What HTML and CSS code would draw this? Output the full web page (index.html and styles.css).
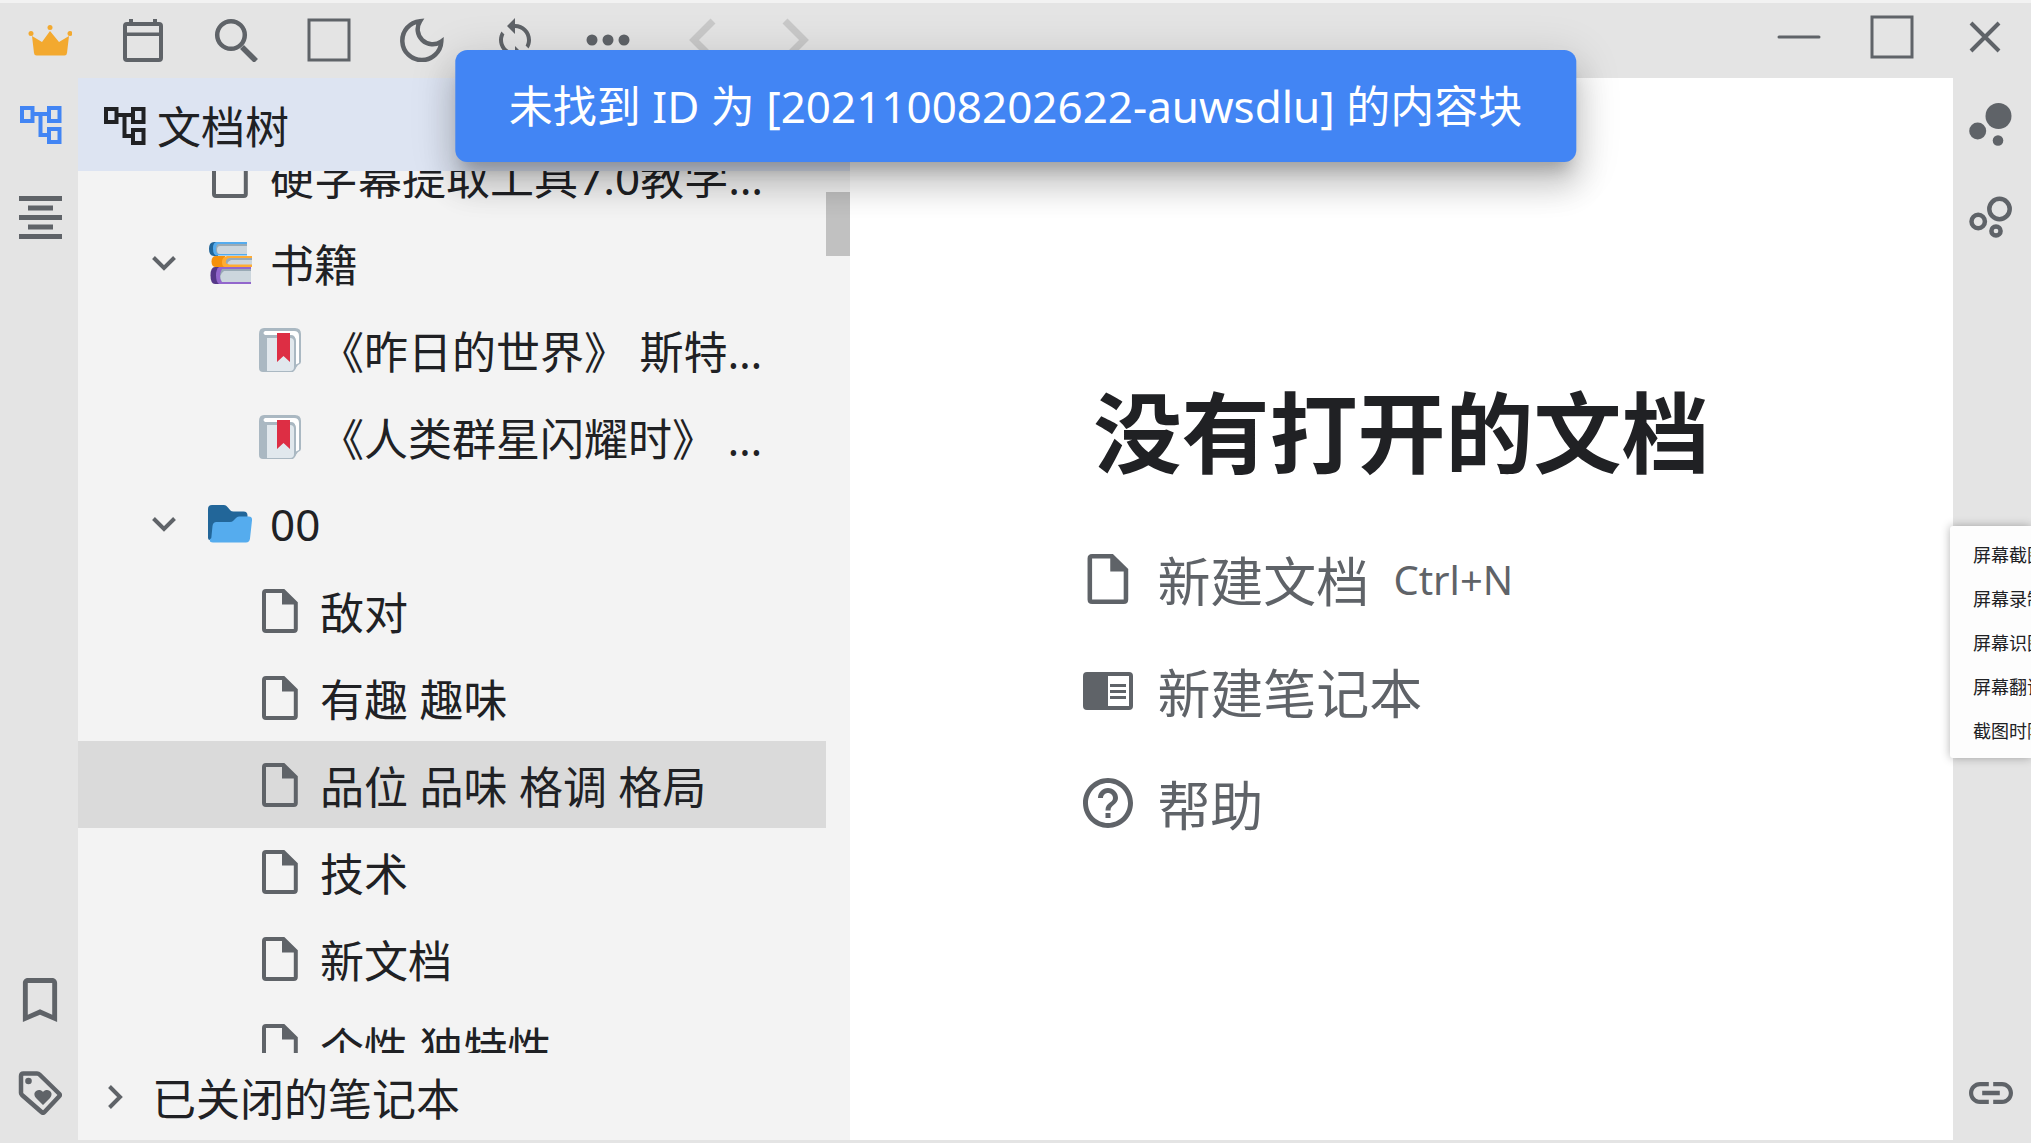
FILE: index.html
```html
<!DOCTYPE html>
<html lang="zh-CN">
  <head>
    <meta charset="UTF-8" />
    <meta name="viewport" content="width=device-width, initial-scale=1.0" />
    <title>思源笔记</title>
    <link rel="stylesheet" href="styles.css">
  </head>
  <body>
    <!-- 图标 -->
    <svg class="sprite" aria-hidden="true">
      <symbol id="iconVIP" viewBox="0 0 44 44">
        <path d="M4 18l10 6 8-11 9 11 10-6-2 17q-.3 2.500-2.500 2.500h-28q-2.200 0-2.500-2.500z" />
        <circle cx="3" cy="15.500" r="2.500" /><circle cx="22" cy="9.500" r="2.500" /><circle cx="42" cy="15.500" r="2.500" />
      </symbol>
      <symbol id="iconCalendar" viewBox="0 0 44 44">
        <path d="M8 1h4v5H8zM32 1h4v5h-4zM4 14.500h36v3.500H4z" />
        <rect x="4" y="6" width="36" height="36" rx="2" fill="none" stroke="currentColor" stroke-width="4" />
      </symbol>
      <symbol id="iconSearch" viewBox="0 0 44 44">
        <circle cx="17" cy="17" r="13.800" fill="none" stroke="currentColor" stroke-width="4.500" />
        <path d="M28 29l14 14" stroke="currentColor" stroke-width="5.500" />
      </symbol>
      <symbol id="iconSquare" viewBox="0 0 44 44">
        <rect x="2" y="2" width="40" height="40" fill="none" stroke="currentColor" stroke-width="3" />
      </symbol>
      <symbol id="iconMoon" viewBox="0 0 44 44">
        <path d="M20 3.200A19.500 19.500 0 1 0 41.300 23.500A15 15 0 0 1 20 3.200z" fill="none" stroke="currentColor" stroke-width="4.500" />
      </symbol>
      <symbol id="iconRefresh" viewBox="1 1 22 22">
        <path d="M12 4V1L8 5l4 4V6c3.310 0 6 2.690 6 6 0 1.010-.25 1.970-.7 2.800l1.460 1.460C19.540 15.030 20 13.570 20 12c0-4.420-3.580-8-8-8zm0 14c-3.310 0-6-2.690-6-6 0-1.010.25-1.970.7-2.800L5.240 7.740C4.460 8.970 4 10.430 4 12c0 4.420 3.580 8 8 8v3l4-4-4-4v3z" />
      </symbol>
      <symbol id="iconMore" viewBox="0 0 44 44">
        <circle cx="6" cy="22" r="5.500" /><circle cx="22" cy="22" r="5.500" /><circle cx="38" cy="22" r="5.500" />
      </symbol>
      <symbol id="iconBack" viewBox="0 0 44 44">
        <path d="M34 3L15 22l19 19" fill="none" stroke="currentColor" stroke-width="7" />
      </symbol>
      <symbol id="iconForward" viewBox="0 0 44 44">
        <path d="M13 3l19 19-19 19" fill="none" stroke="currentColor" stroke-width="7" />
      </symbol>
      <symbol id="iconMin" viewBox="0 0 44 44">
        <path d="M2 22h40" stroke="currentColor" stroke-width="3" stroke-linecap="round" />
      </symbol>
      <symbol id="iconClose" viewBox="0 0 44 44">
        <path d="M8 8l28 28M36 8L8 36" stroke="currentColor" stroke-width="4" />
      </symbol>
      <symbol id="iconFiles" viewBox="0 0 44 44">
        <path d="M4 6h10.500v13H4zM31 6h10.500v13H31zM31 27h10.500v13H31zM16 12h14M22.500 12v21H30" fill="none" stroke="currentColor" stroke-width="4" />
      </symbol>
      <symbol id="iconAlign" viewBox="0 0 44 44">
        <path d="M1 3.500h43M10 13h25M1 22.500h43M10 32h25M1 41.500h43" stroke="currentColor" stroke-width="5" />
      </symbol>
      <symbol id="iconBookmark" viewBox="3 3 18 18">
        <path d="M17 3H7c-1.100 0-1.990.9-1.990 2L5 21l7-3 7 3V5c0-1.100-.9-2-2-2zm0 15l-5-2.180L7 18V5h10v13z" />
      </symbol>
      <symbol id="iconTags" viewBox="0 0 44 44">
        <path d="M3 5q0-2.500 2.500-2.500H19q1.500 0 2.500 1l19.500 19q1.500 1.500 0 3L26.500 41q-1.500 1.500-3 0L4 24q-1-1-1-2z" fill="none" stroke="currentColor" stroke-width="4.500" />
        <circle cx="10.500" cy="10" r="3.300" />
        <path d="M25 34l-7-7c-5-6 3-11 7-6 4-5 12 0 7 6z" />
      </symbol>
      <symbol id="iconGraph" viewBox="0 0 44 44">
        <circle cx="29.500" cy="14" r="13" /><circle cx="8.700" cy="29" r="8.500" /><circle cx="29" cy="38.500" r="5.300" />
      </symbol>
      <symbol id="iconGlobalGraph" viewBox="0 0 44 44">
        <g fill="none" stroke="currentColor" stroke-width="4.500">
          <circle cx="30.500" cy="14" r="10.200" /><circle cx="9.200" cy="26.500" r="6.700" /><circle cx="27" cy="36" r="4.600" />
        </g>
      </symbol>
      <symbol id="iconLink" viewBox="2 2 20 20">
        <path d="M3.900 12c0-1.710 1.390-3.100 3.100-3.100h4V7H7c-2.760 0-5 2.240-5 5s2.240 5 5 5h4v-1.900H7c-1.710 0-3.100-1.390-3.100-3.100zM8 13h8v-2H8v2zm9-6h-4v1.900h4c1.710 0 3.100 1.390 3.100 3.100s-1.390 3.100-3.100 3.100h-4V17h4c2.760 0 5-2.240 5-5s-2.240-5-5-5z" />
      </symbol>
      <symbol id="iconFile" viewBox="0 0 44 44">
        <path d="M8 2h17.500L37.800 14v26q0 2-2 2H8q-2 0-2-2V4q0-2 2-2z" fill="none" stroke="currentColor" stroke-width="4" />
        <path d="M24 2h2l13 12v1.500H24z" />
      </symbol>
      <symbol id="iconDown" viewBox="0 0 44 44">
        <path d="M11.500 16.500L22 27l10.500-10.500" fill="none" stroke="currentColor" stroke-width="4" />
      </symbol>
      <symbol id="iconRight" viewBox="0 0 44 44">
        <path d="M16.500 11.500L27 22 16.500 32.500" fill="none" stroke="currentColor" stroke-width="4" />
      </symbol>
      <symbol id="iconBooks" viewBox="0 0 44 44">
        <path fill="#226699" d="M6 1h4v14H6q-5 0-5-7t5-7z" />
        <path fill="#55acee" d="M9 1h30v13.500H9q-4 0-4-7T9 1z" />
        <path fill="#99aab5" d="M11 3h28v10H11q-3 0-3-5t3-5z" />
        <path fill="#ccd6dd" d="M12 5h27v8H12q-3 0-3-4t3-4z" />
        <path fill="#f4900c" d="M8 15h9v11H8q-4.500 0-4.500-5.500T8 15z" />
        <path fill="#ffac33" d="M19 15h25v11H17q-3 0-3-5t5-6z" />
        <path fill="#99aab5" d="M22 17h22v6H20q-3 0-2-3 .500-3 4-3z" />
        <path fill="#ccd6dd" d="M23 19h21v4.500H21q-4-1 2-4.500z" />
        <path fill="#553788" d="M7 26h7v17H7q-4.500 0-4.500-8.500T7 26z" />
        <path fill="#9266cc" d="M11 26h32v17H11q-3-2-3-8.500T11 26z" />
        <path fill="#99aab5" d="M14 28h29v13H14q-4-6 0-13z" />
        <path fill="#ccd6dd" d="M16 30h27v11H14q-4-7 2-11z" />
      </symbol>
      <symbol id="iconBook" viewBox="0 0 44 44">
        <path fill="#aab8c2" d="M6 0h31q6 0 6 6v28q0 2-3 3l-5 7H5q-4 0-4-4V6q0-6 5-6z" />
        <path fill="#fff" d="M7 3h29q5 0 5 5v27l-4 2V11q0-4-4-4H7q-3-2 0-4z" />
        <path fill="#aab8c2" d="M8 8h25q5 0 5 5v25q0 6-6 6H8z" />
        <path fill="#e1e8ed" d="M9 10h23q4 0 4 4v25q0 4-4 4H9z" />
        <path fill="#dd2e44" d="M19 5h13v29l-6.500-6-6.500 6z" />
      </symbol>
      <symbol id="iconFolder" viewBox="0 0 44 44">
        <path fill="#226699" d="M0 7q0-4 4-4h12q2 0 3.500 2l3 3.500q1 1 3 1h10q4 0 4 4V38H2q-2 0-2-2z" />
        <path fill="#55acee" d="M22 20q2 0 3-1l3-3q1-1.500 3-1.500h10q3.500 0 3 4l-2 18q-.5 4-4 4H5q-4 0-3-3.500 1.500 0 1.500-3L4.500 24q.5-4 4-4z" />
      </symbol>
      <symbol id="iconNotebook" viewBox="0 0 50 50">
        <path fill-rule="evenodd" d="M4 6h42q4 0 4 4v30q0 4-4 4H4q-4 0-4-4V10q0-4 4-4zm21 4v30h21V10z" />
        <path d="M27 18h16v3H27zM27 24h16v3H27zM27 30h16v3H27z" />
      </symbol>
      <symbol id="iconHelp" viewBox="2 2 20 20">
        <path d="M11 18h2v-2h-2v2zm1-16C6.480 2 2 6.480 2 12s4.480 10 10 10 10-4.480 10-10S17.520 2 12 2zm0 18c-4.410 0-8-3.590-8-8s3.590-8 8-8 8 3.590 8 8-3.590 8-8 8zm0-14c-2.210 0-4 1.790-4 4h2c0-1.100.9-2 2-2s2 .9 2 2c0 2-3 1.750-3 5h2c0-2.250 3-2.500 3-5 0-2.210-1.790-4-4-4z" />
      </symbol>
    </svg>

    <header class="toolbar">
      <button class="toolbar-item toolbar-vip" aria-label="会员"><svg class="icon"><use href="#iconVIP" /></svg></button>
      <button class="toolbar-item" aria-label="日记"><svg class="icon"><use href="#iconCalendar" /></svg></button>
      <button class="toolbar-item" aria-label="搜索"><svg class="icon"><use href="#iconSearch" /></svg></button>
      <button class="toolbar-item" aria-label="全屏"><svg class="icon"><use href="#iconSquare" /></svg></button>
      <button class="toolbar-item" aria-label="外观"><svg class="icon"><use href="#iconMoon" /></svg></button>
      <button class="toolbar-item" aria-label="同步"><svg class="icon"><use href="#iconRefresh" /></svg></button>
      <button class="toolbar-item" aria-label="更多"><svg class="icon"><use href="#iconMore" /></svg></button>
      <button class="toolbar-item" aria-label="后退" disabled><svg class="icon"><use href="#iconBack" /></svg></button>
      <button class="toolbar-item" aria-label="前进" disabled><svg class="icon"><use href="#iconForward" /></svg></button>
      <div class="window-controls">
        <button class="toolbar-item" aria-label="最小化"><svg class="icon"><use href="#iconMin" /></svg></button>
        <button class="toolbar-item" aria-label="最大化"><svg class="icon"><use href="#iconSquare" /></svg></button>
        <button class="toolbar-item" aria-label="关闭"><svg class="icon"><use href="#iconClose" /></svg></button>
      </div>
    </header>

    <div class="layout">
      <nav class="dock dock-left">
        <button class="dock-item dock-item-active" aria-label="文档树"><svg class="icon"><use href="#iconFiles" /></svg></button>
        <button class="dock-item" aria-label="大纲"><svg class="icon"><use href="#iconAlign" /></svg></button>
        <div class="dock-space"></div>
        <button class="dock-item" aria-label="书签"><svg class="icon"><use href="#iconBookmark" /></svg></button>
        <button class="dock-item" aria-label="标签"><svg class="icon"><use href="#iconTags" /></svg></button>
      </nav>

      <aside class="panel">
        <div class="panel-header">
          <svg class="icon"><use href="#iconFiles" /></svg>
          <span>文档树</span>
        </div>
        <div class="panel-body">
          <ul class="tree">
            <li><button class="tree-item tree-doc"><svg class="icon"><use href="#iconFile" /></svg><span class="tree-text">硬字幕提取工具7.0教学视频</span></button></li>
            <li><button class="tree-item tree-folder"><svg class="icon tree-arrow"><use href="#iconDown" /></svg><svg class="icon"><use href="#iconBooks" /></svg><span class="tree-text">书籍</span></button></li>
            <li><button class="tree-item tree-child"><svg class="icon"><use href="#iconBook" /></svg><span class="tree-text">《昨日的世界》 斯特凡·茨威格</span></button></li>
            <li><button class="tree-item tree-child"><svg class="icon"><use href="#iconBook" /></svg><span class="tree-text">《人类群星闪耀时》 斯特凡·茨威格</span></button></li>
            <li><button class="tree-item tree-folder"><svg class="icon tree-arrow"><use href="#iconDown" /></svg><svg class="icon"><use href="#iconFolder" /></svg><span class="tree-text">00</span></button></li>
            <li><button class="tree-item tree-child"><svg class="icon"><use href="#iconFile" /></svg><span class="tree-text">敌对</span></button></li>
            <li><button class="tree-item tree-child"><svg class="icon"><use href="#iconFile" /></svg><span class="tree-text">有趣 趣味</span></button></li>
            <li><button class="tree-item tree-child tree-focus"><svg class="icon"><use href="#iconFile" /></svg><span class="tree-text">品位 品味 格调 格局</span></button></li>
            <li><button class="tree-item tree-child"><svg class="icon"><use href="#iconFile" /></svg><span class="tree-text">技术</span></button></li>
            <li><button class="tree-item tree-child"><svg class="icon"><use href="#iconFile" /></svg><span class="tree-text">新文档</span></button></li>
            <li><button class="tree-item tree-child"><svg class="icon"><use href="#iconFile" /></svg><span class="tree-text">个性 独特性</span></button></li>
          </ul>
          <div class="scrollbar"><div class="scrollbar-thumb"></div></div>
        </div>
        <button class="tree-item tree-closed"><svg class="icon"><use href="#iconRight" /></svg><span class="tree-text">已关闭的笔记本</span></button>
      </aside>

      <main class="editor">
        <div class="empty">
          <h1 class="empty-title">没有打开的文档</h1>
          <button class="empty-item"><svg class="empty-icon"><use href="#iconFile" /></svg><span>新建文档</span><kbd>Ctrl+N</kbd></button>
          <button class="empty-item"><svg class="empty-icon"><use href="#iconNotebook" /></svg><span>新建笔记本</span></button>
          <button class="empty-item"><svg class="empty-icon"><use href="#iconHelp" /></svg><span>帮助</span></button>
        </div>
      </main>

      <nav class="dock dock-right">
        <button class="dock-item" aria-label="关系图"><svg class="icon"><use href="#iconGraph" /></svg></button>
        <button class="dock-item" aria-label="全局关系图"><svg class="icon"><use href="#iconGlobalGraph" /></svg></button>
        <div class="dock-space"></div>
        <button class="dock-item" aria-label="反向链接"><svg class="icon"><use href="#iconLink" /></svg></button>
      </nav>
    </div>

    <div class="message" role="status">未找到 ID 为 [20211008202622-auwsdlu] 的内容块</div>

    <!-- 截图菜单 -->
    <div class="side-menu">
      <button class="side-menu-item">屏幕截图</button>
      <button class="side-menu-item">屏幕录制</button>
      <button class="side-menu-item">屏幕识图</button>
      <button class="side-menu-item">屏幕翻译</button>
      <button class="side-menu-item">截图时隐藏</button>
    </div>
  </body>
</html>
```

FILE: styles.css
```css
* {
  box-sizing: border-box;
}
body {
  display: flex;
  flex-direction: column;
  position: relative;
  height: 100vh;
  margin: 0;
  overflow: hidden;
  border-top: 3px solid #f2f2f2;
  background-color: #e4e4e4;
  color: #202124;
  font-family: "Noto Sans", "Noto Sans CJK SC", sans-serif;
  font-size: 44px;
}
button {
  border: none;
  padding: 0;
  background: none;
  color: inherit;
  font: inherit;
  text-align: left;
  cursor: pointer;
}
.sprite {
  display: none;
}
.icon {
  flex-shrink: 0;
  width: 44px;
  height: 44px;
  fill: currentColor;
}

/* 顶栏 */
.toolbar {
  display: flex;
  flex-shrink: 0;
  height: 75px;
  padding-left: 3px;
  color: #5f6368;
}
.toolbar-item {
  display: flex;
  align-items: center;
  justify-content: center;
  width: 93px;
  padding-bottom: 1px;
}
.toolbar-item:disabled {
  color: #c9c9c9;
}
.toolbar-vip {
  color: #f3a92f;
}
.window-controls {
  display: flex;
  height: 69px;
  margin-left: auto;
}

.layout {
  display: flex;
  flex: 1;
  min-height: 0;
  padding-bottom: 3px;
}

/* 侧栏 */
.dock {
  display: flex;
  flex-direction: column;
  flex-shrink: 0;
  width: 78px;
  color: #5f6368;
}
.dock-left {
  padding-left: 2px;
}
.dock-right {
  padding-right: 2px;
}
.dock-item {
  display: flex;
  align-items: center;
  justify-content: center;
  height: 93px;
  padding-bottom: 2px;
}
.dock-item-active {
  color: #4285f4;
}
.dock-space {
  flex: 1;
}

/* 文档树 */
.panel {
  display: flex;
  flex-direction: column;
  flex-shrink: 0;
  width: 38%;
  background-color: #f3f3f3;
}
.panel-header {
  display: flex;
  align-items: center;
  flex-shrink: 0;
  gap: 11px;
  height: 93px;
  padding-left: 24px;
  background-color: #dde4f2;
}
.panel-body {
  display: flex;
  flex: 1;
  min-height: 0;
  overflow: hidden;
}
.tree {
  flex: 1;
  min-width: 0;
  margin: -39px 0 0;
  padding: 0;
  list-style: none;
}
.tree-item {
  display: flex;
  align-items: center;
  flex-shrink: 0;
  gap: 18px;
  width: 100%;
  height: 87px;
  padding-right: 62px;
}
.tree-item .icon {
  color: #5f6368;
}
.tree-text {
  overflow: hidden;
  white-space: nowrap;
  text-overflow: ellipsis;
}
.tree-folder {
  padding-left: 64px;
}
.tree-arrow {
  margin-right: 4px;
}
.tree-doc {
  padding-left: 130px;
}
.tree-child {
  padding-left: 180px;
}
.tree-closed {
  gap: 15px;
  padding-left: 15px;
}
.tree-focus {
  background-color: #dadada;
}
.scrollbar {
  width: 24px;
  padding-top: 21px;
}
.scrollbar-thumb {
  height: 64px;
  background-color: #c1c1c1;
}

/* 空白页 */
.editor {
  display: flex;
  flex: 1;
  align-items: center;
  justify-content: center;
  background-color: #fff;
}
.empty {
  color: #5f6368;
}
.empty-title {
  margin: 0 0 18px;
  padding: 0 10px;
  color: #202124;
  font-size: 88px;
  line-height: 146px;
}
.empty-item {
  display: flex;
  align-items: center;
  gap: 24px;
  height: 112px;
  font-size: 53px;
}
.empty-icon {
  width: 50px;
  height: 50px;
  fill: currentColor;
}
.empty-item kbd {
  font-family: inherit;
  font-size: 40px;
}

/* 消息提示 */
.message {
  position: absolute;
  top: 47px;
  left: 50%;
  transform: translateX(-50%);
  padding: 25px 54px;
  border-radius: 12px;
  background-color: #4285f4;
  box-shadow: 0 16px 16px -9px rgba(0, 0, 0, 0.2),
    0 25px 31px 3px rgba(0, 0, 0, 0.14), 0 9px 43px 6px rgba(0, 0, 0, 0.12);
  color: #fff;
  line-height: 62px;
  white-space: nowrap;
}

.side-menu {
  position: absolute;
  top: 523px;
  right: 0;
  width: 81px;
  padding: 6px 0 6px 23px;
  overflow: hidden;
  border-radius: 3px 0 0 3px;
  background-color: #fdfdfd;
  box-shadow: 0 0 10px rgba(0, 0, 0, 0.3);
}
.side-menu-item {
  display: block;
  height: 44px;
  font-size: 18px;
  white-space: nowrap;
}
```
